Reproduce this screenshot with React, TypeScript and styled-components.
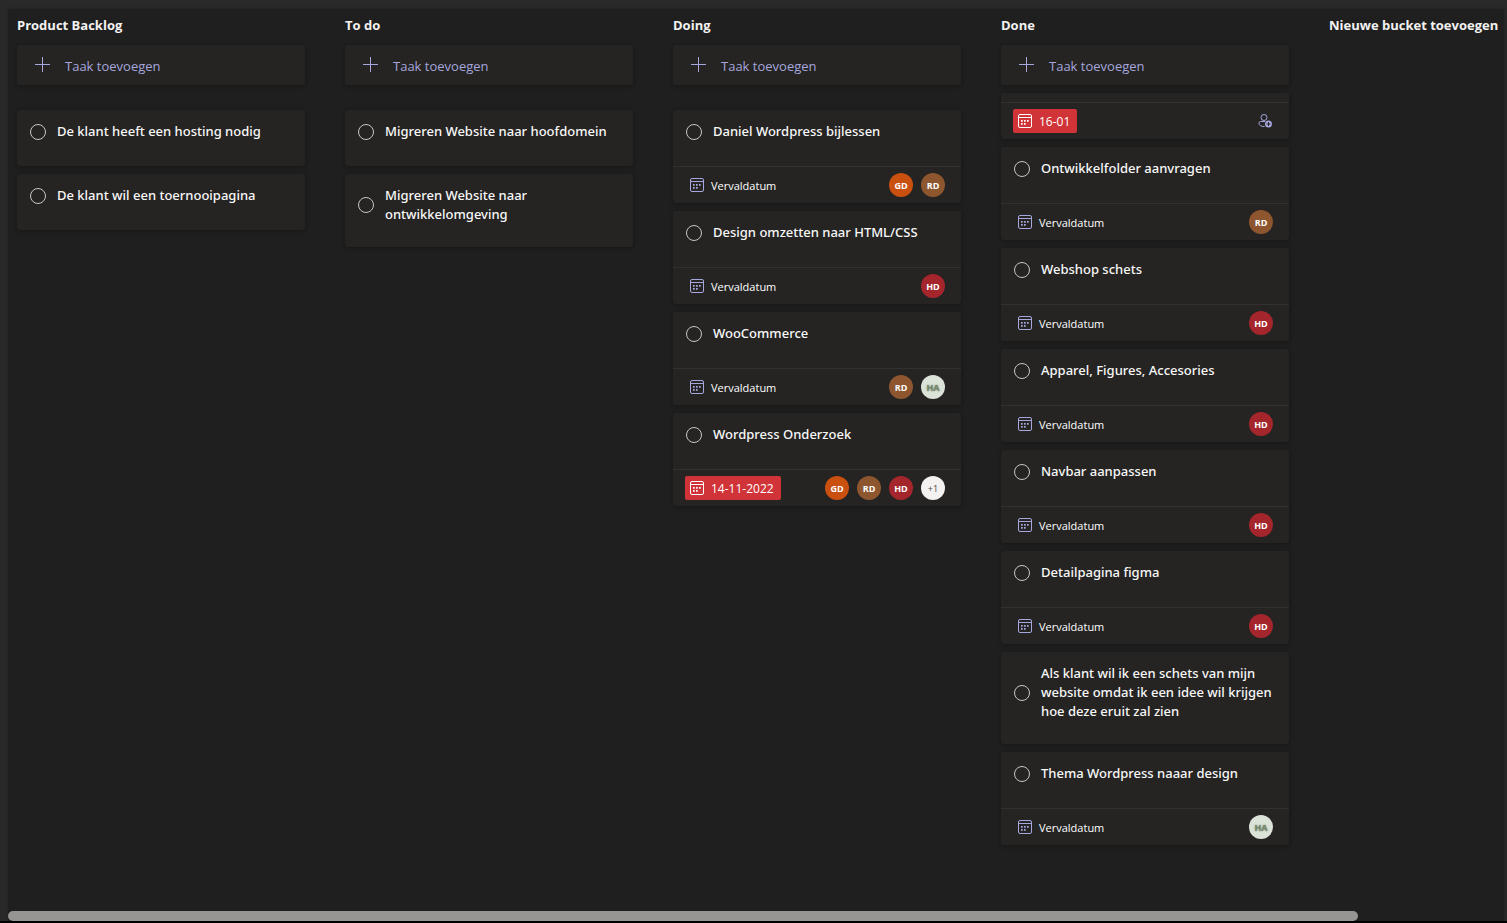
import React from "react";
import styled, { createGlobalStyle } from "styled-components";

const GlobalStyle = createGlobalStyle`
  *, *::before, *::after { box-sizing: border-box; }
  body {
    margin: 0;
    background: #292929;
    color: #f3f2f1;
    font-family: "Segoe UI", "Open Sans", "Noto Sans", sans-serif;
    font-size: 13px;
    overflow: hidden;
  }
  button { font: inherit; color: inherit; background: none; border: 0; padding: 0; cursor: pointer; }
  h2, h3, ul { margin: 0; padding: 0; font: inherit; list-style: none; }
`;

const Page = styled.div`
  height: 100vh;
  padding: 9px 3px 0 8px;
  border-bottom: 2px solid #000000;
  display: flex;
`;

const Board = styled.main`
  flex: 1;
  min-width: 0;
  display: flex;
  flex-direction: column;
  background: #1f1f1f;
  box-shadow: 0 0 3px rgba(0, 0, 0, 0.2);
`;

const Columns = styled.div`
  flex: 1;
  min-height: 0;
  display: flex;
  gap: 40px;
  padding: 6px 0 0 9px;
  overflow: hidden;
`;

const Column = styled.section`
  flex: 0 0 288px;
  display: flex;
  flex-direction: column;
`;

const ColumnTitle = styled.h2`
  height: 30px;
  font-weight: 700;
  line-height: 20px;
  white-space: nowrap;
`;

const NewBucket = styled.button`
  height: 20px;
  align-self: flex-start;
  font-weight: 700;
  line-height: 20px;
  white-space: nowrap;
`;

const AddTask = styled.button`
  flex: none;
  display: flex;
  align-items: center;
  gap: 14px;
  height: 40px;
  padding: 2px 17px 0;
  border-radius: 3px;
  background: #252423;
  box-shadow: 0 1px 4px rgba(0, 0, 0, 0.3);
  color: #a6a7dc;
  line-height: 20px;

  svg { margin-bottom: 4px; }
`;

const TaskList = styled.ul<{ $scrolled?: boolean }>`
  display: flex;
  flex-direction: column;
  gap: 8px;
  margin-top: ${(p) => (p.$scrolled ? 8 : 25)}px;
`;

const Card = styled.li<{ $cut?: boolean }>`
  border-radius: ${(p) => (p.$cut ? "0 0 3px 3px" : "3px")};
  padding-top: ${(p) => (p.$cut ? 9 : 0)}px;
  background: #252423;
  box-shadow: 0 1px 4px rgba(0, 0, 0, 0.3);
`;

const CardHead = styled.label`
  display: flex;
  align-items: flex-start;
  min-height: 56px;
  padding: 12px 12px 23px 13px;
`;

const TitleRow = styled.span`
  display: flex;
  align-items: center;
  gap: 11px;
  font-family: "Segoe UI", "Noto Sans", "Open Sans", sans-serif;
  line-height: 19px;
  font-weight: 500;
  color: #f8f8f8;
`;

const Tick = styled.input`
  appearance: none;
  flex: none;
  width: 16px;
  height: 16px;
  margin: 0;
  border: 1px solid #c8c6c4;
  border-radius: 50%;
`;

const CardFoot = styled.div`
  display: flex;
  align-items: center;
  justify-content: space-between;
  height: 37px;
  padding: 0 16px 0 12px;
  border-top: 1px solid #323130;
`;

const DueDate = styled.button<{ $late?: boolean }>`
  display: flex;
  align-items: center;
  gap: 7px;
  height: 24px;
  padding: 0 7px 0 5px;
  border-radius: 2px;
  background: ${(p) => (p.$late ? "#d13438" : "transparent")};
  color: #ffffff;
  font-size: ${(p) => (p.$late ? 12 : 11)}px;
  font-weight: 500;
  line-height: 16px;

  svg { color: ${(p) => (p.$late ? "#ffffff" : "#a6a7dc")}; }
`;

const DueText = styled.span`
  padding-top: 2px;
`;

const People = styled.div`
  display: flex;
  gap: 8px;
`;

const Avatar = styled.span<{ $bg: string; $fg: string; $bold: boolean; $soft: boolean }>`
  display: flex;
  align-items: center;
  justify-content: center;
  width: 24px;
  height: 24px;
  padding-top: 1px;
  border-radius: 50%;
  background: ${(p) => p.$bg};
  color: ${(p) => p.$fg};
  font-size: 9px;
  font-weight: ${(p) => (p.$bold ? 700 : 400)};
  line-height: 12px;
  text-shadow: ${(p) => (p.$soft ? "0 0 2px #6b8060" : "none")};
`;

const Assign = styled.button`
  display: flex;
  width: 16px;
  height: 16px;
  color: #a6a7dc;
`;

const ScrollTrack = styled.div`
  flex: none;
  height: 10px;
`;

const ScrollThumb = styled.div`
  width: 90.25%;
  height: 10px;
  border-radius: 5px;
  background: #979593;
`;

const PlusIcon = () => (
  <svg width="17" height="17" viewBox="0 0 17 17" fill="none" stroke="currentColor" aria-hidden="true">
    <path d="M8.5 1v15M1 8.5h15" />
  </svg>
);

const CalendarIcon = () => (
  <svg width="14" height="14" viewBox="0 0 14 14" fill="none" stroke="currentColor" aria-hidden="true">
    <rect x="0.5" y="0.5" width="13" height="13" rx="1.5" />
    <path d="M0.5 3.5h13" />
    <path
      fill="currentColor"
      stroke="none"
      d="M6 6h1.7v1.7H6zM9 6h1.7v1.7H9zM3 9h1.7v1.7H3zM6 9h1.7v1.7H6zM3 6h1.7v1.7H3z"
    />
  </svg>
);

const AssignIcon = () => (
  <svg width="16" height="16" viewBox="0 0 16 16" fill="none" stroke="currentColor" aria-hidden="true">
    <circle cx="7" cy="4.5" r="3" />
    <path d="M8 8.5H3.6C2.6 8.5 2 9.2 2 10c0 2.6 2 3.5 5.5 3.5" />
    <circle cx="11.5" cy="11" r="3.5" fill="currentColor" stroke="none" />
    <path d="M11.5 9v4M9.5 11h4" stroke="#252423" />
  </svg>
);

type Person = "GD" | "RD" | "HD" | "HA" | "+1";
type Task = { title?: string; due?: string; late?: boolean; people?: Person[] };

const avatarColours: Record<Person, [string, string]> = {
  GD: ["#ca5010", "#ffffff"],
  RD: ["#8e562e", "#ffffff"],
  HD: ["#a4262c", "#ffffff"],
  HA: ["#dbe3d8", "#71836a"],
  "+1": ["#f3f2f1", "#484644"],
};

const NO_DATE = "Vervaldatum";

const buckets: { name: string; scrolled?: boolean; tasks: Task[] }[] = [
  {
    name: "Product Backlog",
    tasks: [{ title: "De klant heeft een hosting nodig" }, { title: "De klant wil een toernooipagina" }],
  },
  {
    name: "To do",
    tasks: [{ title: "Migreren Website naar hoofdomein" }, { title: "Migreren Website naar ontwikkelomgeving" }],
  },
  {
    name: "Doing",
    tasks: [
      { title: "Daniel Wordpress bijlessen", due: NO_DATE, people: ["GD", "RD"] },
      { title: "Design omzetten naar HTML/CSS", due: NO_DATE, people: ["HD"] },
      { title: "WooCommerce", due: NO_DATE, people: ["RD", "HA"] },
      { title: "Wordpress Onderzoek", due: "14-11-2022", late: true, people: ["GD", "RD", "HD", "+1"] },
    ],
  },
  {
    name: "Done",
    scrolled: true,
    tasks: [
      { due: "16-01", late: true },
      { title: "Ontwikkelfolder aanvragen", due: NO_DATE, people: ["RD"] },
      { title: "Webshop schets", due: NO_DATE, people: ["HD"] },
      { title: "Apparel, Figures, Accesories", due: NO_DATE, people: ["HD"] },
      { title: "Navbar aanpassen", due: NO_DATE, people: ["HD"] },
      { title: "Detailpagina figma", due: NO_DATE, people: ["HD"] },
      { title: "Als klant wil ik een schets van mijn website omdat ik een idee wil krijgen hoe deze eruit zal zien" },
      { title: "Thema Wordpress naaar design", due: NO_DATE, people: ["HA"] },
    ],
  },
];

const TaskCard = ({ title, due, late, people }: Task) => (
  <Card $cut={!title}>
    {title && (
      <CardHead>
        <TitleRow>
          <Tick type="checkbox" />
          <span>{title}</span>
        </TitleRow>
      </CardHead>
    )}
    {due && (
      <CardFoot>
        <DueDate type="button" $late={late}>
          <CalendarIcon />
          <DueText>{due}</DueText>
        </DueDate>
        {people ? (
          <People>
            {people.map((p) => (
              <Avatar
                key={p}
                $bg={avatarColours[p][0]}
                $fg={avatarColours[p][1]}
                $bold={p !== "+1"}
                $soft={p === "HA"}
              >
                {p}
              </Avatar>
            ))}
          </People>
        ) : (
          <Assign type="button" aria-label="Toewijzen">
            <AssignIcon />
          </Assign>
        )}
      </CardFoot>
    )}
  </Card>
);

export default function App() {
  return (
    <>
      <GlobalStyle />
      <Page>
        <Board>
          <Columns>
            {buckets.map((bucket) => (
              <Column key={bucket.name}>
                <ColumnTitle>{bucket.name}</ColumnTitle>
                <AddTask type="button">
                  <PlusIcon />
                  Taak toevoegen
                </AddTask>
                <TaskList $scrolled={bucket.scrolled}>
                  {bucket.tasks.map((task) => (
                    <TaskCard key={task.title ?? task.due} {...task} />
                  ))}
                </TaskList>
              </Column>
            ))}
            <Column>
              <NewBucket type="button">Nieuwe bucket toevoegen</NewBucket>
            </Column>
          </Columns>
          <ScrollTrack>
            <ScrollThumb />
          </ScrollTrack>
        </Board>
      </Page>
    </>
  );
}
